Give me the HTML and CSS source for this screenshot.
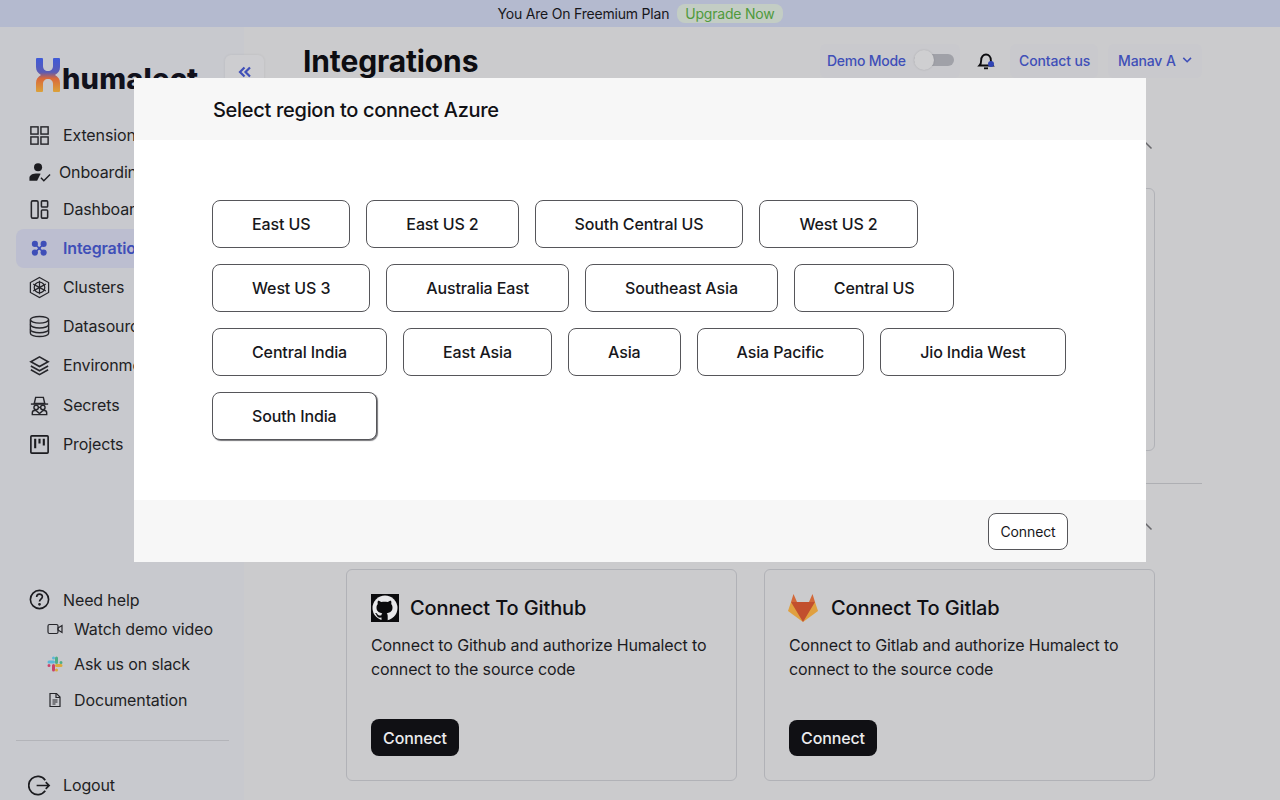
FILE: index.html
```html
<!DOCTYPE html>
<html lang="en">
<head>
    <meta charset="UTF-8">
    <title>Integrations</title>
    <link rel="stylesheet" href="styles.css">
</head>
<body>

    <div class="plan-bar">
        <span>You Are On Freemium Plan</span>
        <span class="upgrade-pill">Upgrade Now</span>
    </div>

    <div class="app">
        <aside class="sidebar">
            <div class="logo">
                <svg class="logo-mark" viewBox="0 0 24 34">
                    <defs>
                        <linearGradient id="logoFill" x1="0" y1="0" x2="0" y2="1">
                            <stop offset="0" stop-color="#3f5ad8"/>
                            <stop offset="0.42" stop-color="#5b5cb4"/>
                            <stop offset="0.6" stop-color="#d9683a"/>
                            <stop offset="1" stop-color="#dba23a"/>
                        </linearGradient>
                    </defs>
                    <path fill="url(#logoFill)" d="M0 1q0-1 1-1h5q1 0 1 1v7c0 3 2 5 5 5s5-2 5-5V1q0-1 1-1h5q1 0 1 1v8c0 4-2 6-5 8 3 2 5 4 5 8v8q0 1-1 1h-5q-1 0-1-1v-7c0-3-2-5-5-5s-5 2-5 5v7q0 1-1 1H1q-1 0-1-1v-8c0-4 2-6 5-8-3-2-5-4-5-8z"/>
                </svg>
                <span class="logo-text">humalect</span>
            </div>
            <button class="collapse-btn">
                <svg width="14" height="14" viewBox="0 0 14 14" fill="none" stroke="#3f4fb8" stroke-width="2.200">
                    <path d="M6.500 2.500L2 7l4.500 4.500M12 2.500L7.500 7l4.500 4.500"/>
                </svg>
            </button>

            <nav class="nav">
                <a class="nav-item short">
                    <svg class="nav-icon" viewBox="0 0 24 24" fill="none" stroke="#26262b" stroke-width="1.500">
                        <rect x="3" y="3" width="7.500" height="7.500"/><rect x="13.500" y="3" width="7.500" height="7.500"/>
                        <rect x="3" y="13.500" width="7.500" height="7.500"/><rect x="13.500" y="13.500" width="7.500" height="7.500"/>
                    </svg>
                    Extensions
                </a>
                <a class="nav-item short tight">
                    <svg class="nav-icon" viewBox="0 0 24 24" fill="#1c1c20">
                        <circle cx="10.500" cy="6.500" r="4.200"/>
                        <path d="M1.500 20.500v-3c0-3 3.500-4.500 8.500-4.500 1.200 0 2.200.1 3.200.3L9.500 20.500z"/>
                        <path d="M13.500 17.500l3 3 6.500-6.500" fill="none" stroke="#1c1c20" stroke-width="1.500"/>
                    </svg>
                    Onboarding
                </a>
                <a class="nav-item short">
                    <svg class="nav-icon" viewBox="0 0 24 24" fill="none" stroke="#26262b" stroke-width="1.600">
                        <rect x="3.500" y="3" width="7" height="18" rx="1.500"/>
                        <rect x="14" y="3" width="6.500" height="6.500" rx="1"/>
                        <rect x="14" y="12.500" width="6.500" height="8.500" rx="1"/>
                    </svg>
                    Dashboard
                </a>
                <a class="nav-item active">
                    <svg class="nav-icon" viewBox="0 0 24 24" fill="#3f4fb8">
                        <circle cx="7.200" cy="7.200" r="3.200"/><circle cx="16.300" cy="7.200" r="3.200"/>
                        <circle cx="7.200" cy="16.300" r="3.200"/><circle cx="16.300" cy="16.300" r="3.200"/>
                        <rect x="10.300" y="10.300" width="3" height="3"/>
                        <path d="M7.200 7.200L16.300 16.300M16.300 7.200L7.200 16.300" stroke="#3f4fb8" stroke-width="1.500"/>
                    </svg>
                    Integrations
                </a>
                <a class="nav-item">
                    <svg class="nav-icon" viewBox="0 0 24 24" fill="none" stroke="#26262b" stroke-width="1.300">
                        <path d="M12 1.500l9.500 5.300v10.400L12 22.500l-9.500-5.300V6.800z"/>
                        <circle cx="12" cy="12" r="5.500"/>
                        <path d="M12 5v14M5.500 8.500l13 7M18.500 8.500l-13 7"/>
                    </svg>
                    Clusters
                </a>
                <a class="nav-item">
                    <svg class="nav-icon" viewBox="0 0 24 24" fill="none" stroke="#26262b" stroke-width="1.500">
                        <ellipse cx="12" cy="5" rx="9.500" ry="3.500"/>
                        <path d="M2.500 5v14c0 2 4.300 3.500 9.500 3.500s9.500-1.500 9.500-3.500V5"/>
                        <path d="M2.500 10c0 2 4.300 3.500 9.500 3.500s9.500-1.500 9.500-3.500M2.500 15c0 2 4.300 3.500 9.500 3.500s9.500-1.500 9.500-3.500"/>
                    </svg>
                    Datasources
                </a>
                <a class="nav-item">
                    <svg class="nav-icon" viewBox="0 0 24 24" fill="none" stroke="#26262b" stroke-width="1.700">
                        <path d="M12 3l9 5-9 5-9-5z"/>
                        <path d="M3 12.500l9 5 9-5M3 16.500l9 5 9-5"/>
                    </svg>
                    Environments
                </a>
                <a class="nav-item secrets">
                    <svg class="nav-icon" viewBox="0 0 24 24" fill="none" stroke="#26262b" stroke-width="1.500">
                        <path d="M8 3.500h8l1.500 6.500h-11z"/>
                        <path d="M3 10.500h18"/>
                        <circle cx="8.500" cy="14" r="2.300"/><circle cx="15.500" cy="14" r="2.300"/>
                        <path d="M10.800 14h2.400"/>
                        <path d="M4.500 21.500v-2c0-1.500 1.500-2.500 3.500-2.500l4 3.500 4-3.500c2 0 3.500 1 3.500 2.500v2z"/>
                    </svg>
                    Secrets
                </a>
                <a class="nav-item">
                    <svg class="nav-icon" viewBox="0 0 24 24" fill="none" stroke="#1c1c20" stroke-width="1.700">
                        <rect x="3" y="3" width="18" height="18" rx="1"/>
                        <path d="M7.500 6v10M12 6v5M16.500 6v7" stroke-width="2.200"/>
                    </svg>
                    Projects
                </a>
            </nav>

            <div class="help">
                <a class="nav-item help-title">
                    <svg class="nav-icon" viewBox="0 0 24 24" fill="none" stroke="#1c1c20" stroke-width="1.700">
                        <circle cx="12" cy="12" r="9.500"/>
                        <path d="M9 9.500c0-4 6-4 6-.5 0 2.500-3 2.500-3 5"/>
                        <circle cx="12" cy="17" r=".6" fill="#1c1c20"/>
                    </svg>
                    Need help
                </a>
                <a class="help-item">
                    <svg class="help-icon" viewBox="0 0 16 16" fill="none" stroke="#26262b" stroke-width="1.200">
                        <rect x="1" y="3.500" width="10" height="9" rx="1.500"/>
                        <path d="M11 7l4-2.500v7L11 9z"/>
                    </svg>
                    Watch demo video
                </a>
                <a class="help-item">
                    <svg class="help-icon" viewBox="0 0 16 16" fill="none" stroke-width="3" stroke-linecap="round">
                        <path d="M6.500 2v0M2 6h4.500" stroke="#5cb8d8"/>
                        <path d="M9.500 2v4.500M14 6.500h0" stroke="#4fae86"/>
                        <path d="M14 9.500H9.500M9.500 14h0" stroke="#dcaa3e"/>
                        <path d="M2 9.500h0M6.500 9.500V14" stroke="#c9436a"/>
                    </svg>
                    Ask us on slack
                </a>
                <a class="help-item">
                    <svg class="help-icon" viewBox="0 0 16 16" fill="none" stroke="#26262b" stroke-width="1.200">
                        <path d="M3 1.500h6.500L13 5v9.500H3z"/>
                        <path d="M9 1.500V5.500h4M5.500 8h5M5.500 10h5M5.500 12h3"/>
                    </svg>
                    Documentation
                </a>
            </div>

            <div class="sidebar-line"></div>

            <a class="nav-item logout">
                <svg class="nav-icon" viewBox="0 0 24 24" fill="none" stroke="#1c1c20" stroke-width="1.800">
                    <path d="M18 6.500A9.500 9.500 0 1 0 18 17.500"/>
                    <path d="M9 12h13M18.500 8.500L22 12l-3.500 3.500"/>
                </svg>
                Logout
            </a>
        </aside>

        <main class="main">
            <header class="topbar">
                <h1>Integrations</h1>
                <div class="top-actions">
                    <div class="top-pill demo-pill">
                        Demo Mode
                        <span class="toggle"><span class="toggle-knob"></span></span>
                    </div>
                    <div class="bell">
                        <svg width="18" height="18" viewBox="0 0 18 18" fill="none" stroke="#0c0c0f" stroke-width="1.900">
                            <path d="M2.500 13.500c1.500-1.500 1.700-3 1.700-5.500 0-3 2-5.500 4.800-5.500s4.800 2.500 4.800 5.500c0 2.500.2 4 1.700 5.500z"/>
                            <path d="M7 16.300h4" stroke-width="1.800"/>
                        </svg>
                        <span class="bell-dot"></span>
                    </div>
                    <div class="top-pill contact-pill">Contact us</div>
                    <div class="top-pill user-pill">
                        Manav A
                        <svg width="12" height="12" viewBox="0 0 12 12" fill="none" stroke="#3f4fb8" stroke-width="1.800">
                            <path d="M1.500 3.500L6 8l4.500-4.500"/>
                        </svg>
                    </div>
                </div>
            </header>

            <section class="section first-section">
                <div class="section-head">
                    <svg width="14" height="14" viewBox="0 0 14 14" fill="none" stroke="#67676b" stroke-width="1.500">
                        <path d="M1.500 9.500L7 4l5.500 5.500"/>
                    </svg>
                </div>
                <div class="cards">
                    <div class="card tall"></div>
                    <div class="card tall"></div>
                </div>
            </section>

            <div class="section-line"></div>

            <section class="section">
                <div class="section-head">
                    <svg width="14" height="14" viewBox="0 0 14 14" fill="none" stroke="#67676b" stroke-width="1.500">
                        <path d="M1.500 9.500L7 4l5.500 5.500"/>
                    </svg>
                </div>
                <div class="cards">
                    <div class="card">
                        <div class="card-head">
                            <svg class="github-icon" viewBox="0 0 28 28">
                                <rect width="28" height="28" fill="#0b0b0d"/>
                                <circle cx="14" cy="14" r="12.500" fill="#e8e8ea"/>
                                <path fill="#0b0b0d" d="M10.500 27v-3.500c-3 .6-4.500-.8-5-2.500-.4-1-1-1.500-1.600-1.900 1-.3 2 .2 2.700 1.300.8 1.200 2 1.300 3.800.8.100-.9.400-1.500.9-2-3.500-.5-5.800-2-5.800-5.700 0-1.400.5-2.500 1.300-3.400-.2-.7-.4-2 .2-3.400 1.300 0 2.500.7 3.500 1.400 1.800-.5 4.200-.5 6 0 1-.7 2.200-1.400 3.500-1.400.6 1.400.4 2.700.2 3.400.8.900 1.300 2 1.300 3.400 0 3.700-2.300 5.200-5.800 5.700.7.600 1 1.500 1 2.800V27z"/>
                            </svg>
                            <h3>Connect To Github</h3>
                        </div>
                        <p>Connect to Github and authorize Humalect to connect to the source code</p>
                        <button class="dark-btn">Connect</button>
                    </div>
                    <div class="card">
                        <div class="card-head gitlab-head">
                            <svg class="gitlab-icon" viewBox="0 0 30 28">
                                <path fill="#e0a03f" d="M15 28L0 17l3-9h7z"/>
                                <path fill="#e0a03f" d="M15 28l15-11-3-9h-7z"/>
                                <path fill="#d2693a" d="M3 8L5.500 0 9 8zM27 8L24.500 0 21 8z"/>
                                <path fill="#c24f2e" d="M15 28L9 8h12zM15 28L3 8h6zM15 28L27 8h-6z"/>
                            </svg>
                            <h3>Connect To Gitlab</h3>
                        </div>
                        <p>Connect to Gitlab and authorize Humalect to connect to the source code</p>
                        <button class="dark-btn gitlab-btn">Connect</button>
                    </div>
                </div>
            </section>
        </main>
    </div>

    <div class="modal">
        <div class="modal-head">Select region to connect Azure</div>
        <div class="modal-body">
            <button class="region-btn">East US</button>
            <button class="region-btn">East US 2</button>
            <button class="region-btn">South Central US</button>
            <button class="region-btn">West US 2</button>
            <button class="region-btn">West US 3</button>
            <button class="region-btn">Australia East</button>
            <button class="region-btn">Southeast Asia</button>
            <button class="region-btn">Central US</button>
            <button class="region-btn">Central India</button>
            <button class="region-btn">East Asia</button>
            <button class="region-btn">Asia</button>
            <button class="region-btn">Asia Pacific</button>
            <button class="region-btn">Jio India West</button>
            <button class="region-btn focused">South India</button>
        </div>
        <div class="modal-foot">
            <button class="connect-btn">Connect</button>
        </div>
    </div>

</body>
</html>
```

FILE: styles.css
```css
* {
    box-sizing: border-box;
}

body {
    font-family: 'Inter', 'Liberation Sans', sans-serif;
    margin: 0;
    height: 800px;
    overflow: hidden;
    background: #cbcbcd;
    color: #1b1b1f;
    position: relative;
    letter-spacing: -0.008em;
}

button {
    font-family: inherit;
    letter-spacing: inherit;
    cursor: pointer;
}

.plan-bar {
    height: 27px;
    background: #b4bacf;
    display: flex;
    align-items: center;
    justify-content: center;
    gap: 8px;
    font-size: 14px;
    letter-spacing: -0.2px;
    color: #17171b;
}

.upgrade-pill {
    background: #c3cdc4;
    color: #4f9a3c;
    padding: 1px 8px;
    border-radius: 8px;
}

.app {
    display: flex;
    height: 773px;
}

.sidebar {
    width: 244px;
    flex-shrink: 0;
    background: #c8c9ce;
    position: relative;
    padding-left: 16px;
}

.logo {
    height: 89.500px;
    display: flex;
    align-items: flex-start;
    padding: 31px 0 0 20px;
    gap: 2px;
}

.logo-mark {
    width: 24px;
    height: 34px;
    flex-shrink: 0;
}

.logo-text {
    font-size: 29px;
    font-weight: 800;
    color: #11111c;
    line-height: 38px;
    margin-top: 2px;
    letter-spacing: 0.2px;
}

.collapse-btn {
    position: absolute;
    left: 225px;
    top: 28px;
    width: 39px;
    height: 40px;
    border: none;
    border-radius: 6px;
    background: #cdcdd0;
    box-shadow: 0 0 3px rgba(0,0,0,0.08);
    padding: 0 0 4px;
}

.nav-item {
    display: flex;
    align-items: center;
    gap: 12px;
    height: 39px;
    padding-left: 12px;
    font-size: 16px;
    color: #1f1f24;
    white-space: nowrap;
}

.nav-item.short {
    height: 37px;
}

.nav-item.tight {
    gap: 8px;
}

.nav-item.secrets {
    margin-top: 1px;
}

.nav-item.active {
    margin-top: 1px;
    background: #bcbed0;
    border-radius: 8px;
    color: #3f4fb8;
    font-weight: 600;
}

.nav-icon {
    width: 23px;
    height: 23px;
    flex-shrink: 0;
}

.help {
    margin-top: 124.500px;
}

.nav-item.help-title {
    height: 23px;
}

.help-item {
    display: flex;
    align-items: center;
    gap: 11px;
    height: 35.500px;
    padding-left: 31px;
    font-size: 16px;
    color: #1f1f24;
}

.help-icon {
    width: 16px;
    height: 16px;
    flex-shrink: 0;
}

.sidebar-line {
    width: 213px;
    height: 1px;
    background: #b3b4b9;
    margin-top: 22px;
}

.logout {
    margin-top: 25px;
}

.main {
    flex: 1;
    padding: 0 78px 0 59px;
}

.topbar {
    height: 66px;
    display: flex;
    justify-content: space-between;
    align-items: flex-start;
}

.topbar h1 {
    margin: 15px 0 0;
    font-size: 30px;
    line-height: 38px;
    font-weight: 700;
    color: #0d0d11;
}

.top-actions {
    display: flex;
    align-items: center;
    margin-top: 17px;
    height: 34px;
    gap: 10px;
}

.top-pill {
    height: 34px;
    display: flex;
    align-items: center;
    padding: 0 9px 2px;
    font-size: 14px;
    font-weight: 500;
    color: #3f4fb8;
    background: #c9c9cd;
    border-radius: 6px;
    white-space: nowrap;
}

.demo-pill {
    gap: 8px;
    padding: 0 7px 2px;
    width: 140px;
    letter-spacing: -0.25px;
}

.contact-pill {
    width: 88px;
}

.user-pill {
    gap: 6px;
    padding: 0 10px 2px;
    width: 94px;
}

.toggle {
    width: 40px;
    height: 12px;
    background: #a0a1a8;
    border-radius: 6px;
    position: relative;
    display: block;
    flex-shrink: 0;
}

.toggle-knob {
    position: absolute;
    left: 0;
    top: -4px;
    width: 20px;
    height: 20px;
    border-radius: 50%;
    background: #cfcfd1;
    box-shadow: 0 0 2px rgba(0,0,0,0.15);
}

.bell {
    width: 32px;
    height: 18px;
    margin-right: -2px;
    display: flex;
    justify-content: center;
    position: relative;
}

.bell-dot {
    position: absolute;
    left: 17.500px;
    top: 8.500px;
    width: 6px;
    height: 6px;
    border-radius: 50%;
    background: #3044b4;
}

.section {
    padding: 0 47px 0 43px;
}

.section-head {
    display: flex;
    justify-content: flex-end;
    align-items: center;
    margin-right: 2px;
}

.first-section .section-head {
    height: 95px;
    align-items: flex-start;
    padding: 46px 0 0;
}

.section-line {
    height: 1px;
    background: #aeafb3;
    margin-top: 32px;
}

.section:last-child .section-head {
    height: 85px;
}

.cards {
    display: grid;
    grid-template-columns: 391px 391px;
    gap: 27px;
}

.card {
    height: 212px;
    padding: 24px;
    border: 1px solid #b1b2b7;
    border-radius: 6px;
    display: flex;
    flex-direction: column;
}

.card.tall {
    height: 263px;
}

.card-head {
    display: flex;
    align-items: center;
    gap: 11px;
    height: 28px;
    margin-bottom: 11px;
}

.gitlab-head {
    margin-left: -1px;
    gap: 13px;
}

.card-head h3 {
    margin: 0;
    font-size: 20px;
    font-weight: 500;
    color: #0f0f13;
}

.github-icon {
    width: 28px;
    height: 28px;
}

.gitlab-icon {
    width: 30px;
    height: 28px;
}

.card p {
    margin: 0;
    font-size: 16px;
    line-height: 24px;
    color: #1b1b1f;
}

.dark-btn {
    margin-top: 38px;
    width: 88px;
    height: 37px;
    background: #101014;
    color: #ececee;
    border: none;
    border-radius: 8px;
    font-size: 16px;
    font-weight: 500;
}

.gitlab-btn {
    margin-top: 39px;
}

.modal {
    position: absolute;
    left: 134px;
    top: 78px;
    width: 1012px;
    height: 484px;
    background: #fff;
    display: flex;
    flex-direction: column;
}

.modal-head {
    height: 62px;
    background: #f7f7f7;
    padding: 2px 0 0 79px;
    display: flex;
    align-items: center;
    font-size: 20px;
    font-weight: 500;
    letter-spacing: -0.015em;
    color: #111115;
}

.modal-body {
    flex: 1;
    padding: 60px 78px 0;
    display: flex;
    flex-wrap: wrap;
    align-content: flex-start;
    gap: 16px;
}

.region-btn {
    height: 48px;
    padding: 0 39px;
    background: #fff;
    border: 1px solid #56565a;
    border-radius: 8px;
    font-size: 16px;
    font-weight: 500;
    color: #17171b;
}

.region-btn.focused {
    box-shadow: 1px 1px 1px #77777b;
}

.modal-foot {
    height: 62px;
    background: #f7f7f7;
    padding-right: 78px;
    display: flex;
    align-items: center;
    justify-content: flex-end;
}

.connect-btn {
    width: 80px;
    height: 37px;
    background: #fff;
    border: 1px solid #56565a;
    border-radius: 8px;
    font-size: 14px;
    color: #17171b;
}
```
